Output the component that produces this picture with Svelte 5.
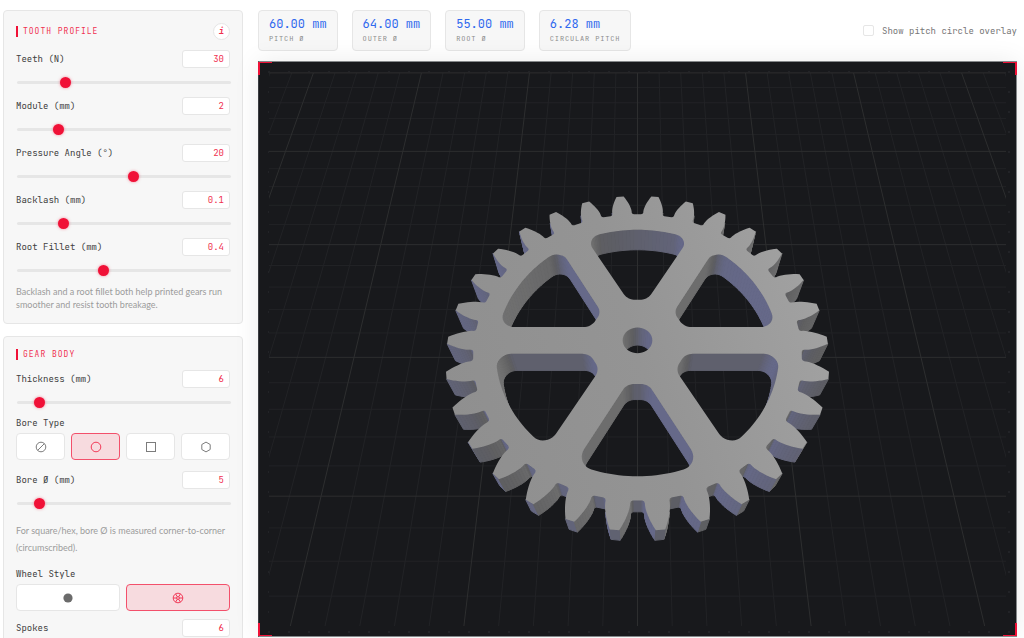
<script lang="ts">
	type Point = [number, number];

	interface Slider {
		id: string;
		label: string;
		min: number;
		max: number;
		step: number;
	}

	const profileSliders: Slider[] = [
		{ id: 'teeth', label: 'Teeth (N)', min: 6, max: 120, step: 1 },
		{ id: 'module', label: 'Module (mm)', min: 0.3, max: 10, step: 0.1 },
		{ id: 'pressure', label: 'Pressure Angle (°)', min: 14, max: 25, step: 0.5 },
		{ id: 'backlash', label: 'Backlash (mm)', min: 0, max: 0.5, step: 0.01 },
		{ id: 'fillet', label: 'Root Fillet (mm)', min: 0, max: 1, step: 0.05 }
	];
	const thicknessSlider: Slider = { id: 'thickness', label: 'Thickness (mm)', min: 2, max: 50, step: 0.5 };
	const boreSlider: Slider = { id: 'bore', label: 'Bore Ø (mm)', min: 1, max: 50, step: 0.5 };
	const spokeSlider: Slider = { id: 'spokes', label: 'Spokes', min: 3, max: 12, step: 1 };

	let params = $state<Record<string, number>>({
		teeth: 30,
		module: 2,
		pressure: 20,
		backlash: 0.1,
		fillet: 0.4,
		thickness: 6,
		bore: 5,
		spokes: 6
	});
	let boreType = $state('round');
	let wheelStyle = $state('spoked');
	let showPitch = $state(false);

	const boreTypes = ['none', 'round', 'square', 'hex'];
	const wheelStyles = ['solid', 'spoked'];

	let pitchD = $derived(params.teeth * params.module);
	let outerD = $derived(pitchD + 2 * params.module);
	let rootD = $derived(pitchD - 2.5 * params.module);

	let stats = $derived([
		{ value: pitchD, label: 'Pitch Ø' },
		{ value: outerD, label: 'Outer Ø' },
		{ value: rootD, label: 'Root Ø' },
		{ value: Math.PI * params.module, label: 'Circular Pitch' }
	]);

	// Camera: 45° lens looking down at the origin
	const FOCAL = 668;
	const TILT = Math.atan2(1.6, 0.9);
	const SIN = Math.sin(TILT);
	const COS = Math.cos(TILT);
	let distance = $derived(outerD * 1.8);

	function project(x: number, y: number, z: number): Point {
		const depth = distance - z * SIN + y * COS;
		return [(FOCAL * x) / depth, (-FOCAL * (z * COS + y * SIN)) / depth];
	}

	function polar(r: number, a: number): Point {
		return [r * Math.cos(a), r * Math.sin(a)];
	}

	function arc(cx: number, cy: number, r: number, a0: number, a1: number, n: number): Point[] {
		return Array.from({ length: n + 1 }, (_, i) => {
			const a = a0 + ((a1 - a0) * i) / n;
			return [cx + r * Math.cos(a), cy + r * Math.sin(a)] as Point;
		});
	}

	function gearOutline(): Point[] {
		const rp = pitchD / 2;
		const ro = outerD / 2;
		const rr = rootD / 2;
		const rb = rp * Math.cos((params.pressure * Math.PI) / 180);
		const inv = (r: number) => {
			const t = Math.acos(Math.min(1, rb / r));
			return Math.tan(t) - t;
		};
		const half = (Math.PI * params.module / 2 - params.backlash) / 2 / rp + inv(rp);
		const start = Math.max(rb, rr + params.fillet);
		const steps = 8;
		const flank: Point[] = [];
		flank.push([rr, half + params.fillet / rr]);
		flank.push([rr + params.fillet * 0.3, half + (params.fillet * 0.3) / rr]);
		flank.push([rr + params.fillet, half]);
		for (let i = 0; i <= steps; i++) {
			const r = start + ((ro - start) * i) / steps;
			flank.push([r, half - inv(r)]);
		}
		const pts: Point[] = [];
		for (let k = 0; k < params.teeth; k++) {
			const c = (k * 2 * Math.PI) / params.teeth;
			for (const [r, a] of flank) pts.push(polar(r, c - a));
			for (const [r, a] of [...flank].reverse()) pts.push(polar(r, c + a));
		}
		return pts;
	}

	function pocket(from: number, span: number): Point[] {
		const rim = rootD / 2 - 3.75;
		const hub = params.bore / 2 + 5.7;
		const w = 2.6;
		const f = 2.2;
		const outer = Math.asin((w + f) / (rim - f));
		const inner = Math.asin(Math.min(1, (w + f) / (hub + f)));
		const to = from + span;
		const q = Math.PI / 2;
		const o1 = polar(rim - f, from + outer);
		const o2 = polar(rim - f, to - outer);
		const i1 = polar(hub + f, from + inner);
		const i2 = polar(hub + f, to - inner);
		return [
			...arc(o1[0], o1[1], f, from - q, from + outer, 10),
			...arc(0, 0, rim, from + outer, to - outer, 20),
			...arc(o2[0], o2[1], f, to - outer, to + q, 10),
			...arc(i2[0], i2[1], f, to + q, to - inner + Math.PI, 8),
			...arc(0, 0, hub, to - inner, from + inner, 4),
			...arc(i1[0], i1[1], f, from + inner + Math.PI, from + 3 * q, 8)
		];
	}

	function holes(): Point[][] {
		const result: Point[][] = [];
		const r = params.bore / 2;
		if (boreType === 'round') result.push(arc(0, 0, r, 0, 2 * Math.PI, 40));
		if (boreType === 'square') result.push(arc(0, 0, r, Math.PI / 4, 2.25 * Math.PI, 4));
		if (boreType === 'hex') result.push(arc(0, 0, r, 0, 2 * Math.PI, 6));
		if (wheelStyle === 'spoked') {
			const span = (2 * Math.PI) / params.spokes;
			for (let k = 0; k < params.spokes; k++) result.push(pocket(k * span, span));
		}
		return result;
	}

	// Cool fill light from the left, weak neutral light from the right
	function shade(nx: number, ny: number): string {
		const cool = Math.max(0, -0.93 * nx - 0.37 * ny);
		const warm = Math.max(0, 0.97 * nx + 0.2 * ny);
		const r = Math.round(91 + 11 * cool + 24 * warm);
		const g = Math.round(91 + 14 * cool + 24 * warm);
		const b = Math.round(93 + 44 * cool + 22 * warm);
		return `rgb(${r}, ${g}, ${b})`;
	}

	function toPath(pts: Point[]): string {
		return 'M' + pts.map((p) => `${p[0].toFixed(2)} ${p[1].toFixed(2)}`).join('L') + 'Z';
	}

	function wallsOf(pts: Point[], z: number, flip: number) {
		const out: { y: number; d: string; fill: string }[] = [];
		pts.forEach(([x0, y0], i) => {
			const [x1, y1] = pts[(i + 1) % pts.length];
			const len = Math.hypot(x1 - x0, y1 - y0);
			if (len < 0.0001) return;
			const nx = (flip * (y1 - y0)) / len;
			const ny = (flip * (x0 - x1)) / len;
			if (nx * -x0 + ny * (-distance * COS - y0) <= 0) return;
			out.push({
				y: (y0 + y1) / 2,
				d: toPath([project(x0, y0, z), project(x1, y1, z), project(x1, y1, -z), project(x0, y0, -z)]),
				fill: shade(nx, ny)
			});
		});
		return out;
	}

	let gear = $derived.by(() => {
		const z = params.thickness / 2;
		const outline = gearOutline();
		const cuts = holes();
		const walls = [...wallsOf(outline, z, 1), ...cuts.flatMap((c) => wallsOf(c, z, -1))];
		walls.sort((a, b) => b.y - a.y);
		const face = [outline, ...cuts].map((c) => toPath(c.map(([x, y]) => project(x, y, z)))).join('');
		return { walls, face };
	});

	let pitchCircle = $derived(
		toPath(arc(0, 0, pitchD / 2, 0, 2 * Math.PI, 120).map(([x, y]) => project(x, y, params.thickness / 2)))
	);

	let grid = $derived.by(() => {
		const z = -params.thickness / 2;
		const lines: { a: Point; b: Point; major: boolean }[] = [];
		for (let i = -24; i <= 24; i++) {
			lines.push({ a: project(i * 5, 75, z), b: project(i * 5, -60, z), major: i % 5 === 0 });
		}
		for (let i = -12; i <= 15; i++) {
			lines.push({ a: project(-120, i * 5, z), b: project(120, i * 5, z), major: i % 5 === 0 });
		}
		return lines.sort((a, b) => Number(a.major) - Number(b.major));
	});
</script>

{#snippet control(s: Slider)}
	<div class="row">
		<div class="row-head">
			<label for={s.id}>{s.label}</label>
			<input class="value" id={s.id} type="number" step="any" bind:value={params[s.id]} />
		</div>
		<input
			class="range"
			type="range"
			aria-label={s.label}
			min={s.min}
			max={s.max}
			step={s.step}
			bind:value={params[s.id]}
		/>
	</div>
{/snippet}

<div class="page">
	<aside class="sidebar">
		<section class="panel">
			<header class="panel-head">
				<h2>Tooth Profile</h2>
				<button class="info" aria-label="About tooth profile">i</button>
			</header>
			{#each profileSliders as s (s.id)}
				{@render control(s)}
			{/each}
			<p class="hint">Backlash and a root fillet both help printed gears run smoother and resist tooth breakage.</p>
		</section>

		<section class="panel">
			<header class="panel-head">
				<h2>Gear Body</h2>
			</header>
			{@render control(thicknessSlider)}

			<div class="group" role="group" aria-labelledby="bore-label">
				<span class="group-label" id="bore-label">Bore Type</span>
				<div class="options">
					{#each boreTypes as type (type)}
						<button
							class="option"
							class:active={boreType === type}
							aria-label={type}
							aria-pressed={boreType === type}
							onclick={() => (boreType = type)}
						>
							<svg viewBox="0 0 12 12" class="icon">
								{#if type === 'none'}
									<circle cx="6" cy="6" r="4.8" />
									<path d="M2.6 9.4 9.4 2.6" />
								{:else if type === 'round'}
									<circle cx="6" cy="6" r="4.8" />
								{:else if type === 'square'}
									<rect x="1.5" y="1.5" width="9" height="9" />
								{:else}
									<path d="M6 1.1 10.2 3.5V8.5L6 10.9 1.8 8.5V3.5Z" />
								{/if}
							</svg>
						</button>
					{/each}
				</div>
			</div>

			{@render control(boreSlider)}
			<p class="hint loose">For square/hex, bore Ø is measured corner-to-corner (circumscribed).</p>

			<div class="group tight" role="group" aria-labelledby="wheel-label">
				<span class="group-label" id="wheel-label">Wheel Style</span>
				<div class="options">
					{#each wheelStyles as style (style)}
						<button
							class="option"
							class:active={wheelStyle === style}
							aria-label={style}
							aria-pressed={wheelStyle === style}
							onclick={() => (wheelStyle = style)}
						>
							<svg viewBox="0 0 12 12" class="icon">
								{#if style === 'solid'}
									<circle class="solid" cx="6" cy="6" r="4.6" />
								{:else}
									<circle cx="6" cy="6" r="4.8" />
									<circle cx="6" cy="6" r="1.4" />
									<path d="M7.4 6H10.8M4.6 6H1.2M6.7 7.2 8.4 10.1M5.3 4.8 3.6 1.9M5.3 7.2 3.6 10.1M6.7 4.8 8.4 1.9" />
								{/if}
							</svg>
						</button>
					{/each}
				</div>
			</div>

			{@render control(spokeSlider)}
		</section>
	</aside>

	<main class="main">
		<div class="toolbar">
			<div class="stats">
				{#each stats as stat (stat.label)}
					<div class="stat">
						<span class="stat-value">{stat.value.toFixed(2)} mm</span>
						<span class="stat-label">{stat.label}</span>
					</div>
				{/each}
			</div>
			<label class="overlay">
				<input type="checkbox" bind:checked={showPitch} />
				Show pitch circle overlay
			</label>
		</div>

		<div class="viewport">
			<svg class="scene" viewBox="-369 -277 738 554" preserveAspectRatio="xMidYMid slice">
				<defs>
					<linearGradient id="face" gradientUnits="userSpaceOnUse" x1="-190" y1="60" x2="190" y2="-60">
						<stop offset="0" stop-color="#8f8f8f" />
						<stop offset="0.5" stop-color="#949494" />
						<stop offset="1" stop-color="#a2a2a2" />
					</linearGradient>
				</defs>
				<rect class="floor" x="-2000" y="-2000" width="4000" height="4000" />
				{#each grid as line}
					<line class="grid" class:major={line.major} x1={line.a[0]} y1={line.a[1]} x2={line.b[0]} y2={line.b[1]} />
				{/each}
				{#each gear.walls as wall}
					<path class="wall" d={wall.d} fill={wall.fill} stroke={wall.fill} />
				{/each}
				<path d={gear.face} fill="url(#face)" fill-rule="evenodd" />
				{#if showPitch}
					<path class="pitch" d={pitchCircle} />
				{/if}
			</svg>
			<span class="corner top left"></span>
			<span class="corner top right"></span>
			<span class="corner bottom left"></span>
			<span class="corner bottom right"></span>
		</div>
	</main>
</div>

<style>
	:global(body) {
		background: #fff;
	}

	.page {
		--red: #f01137;
		--red-text: #f0304f;
		--line: #e6e6e6;
		--mono: 'JetBrains Mono', 'DejaVu Sans Mono', monospace;
		box-sizing: border-box;
		display: flex;
		gap: 15px;
		height: 100vh;
		padding: 10px 7px 1px 3px;
		overflow: hidden;
		font-family: var(--mono);
		font-size: 9px;
		color: #404040;
	}

	.sidebar {
		flex: 0 0 240px;
		display: flex;
		flex-direction: column;
		gap: 12px;
	}

	.panel {
		flex: none;
		padding: 12px;
		background: #f7f7f7;
		border: 1px solid var(--line);
		border-radius: 4px;
	}

	.panel-head {
		display: flex;
		align-items: center;
		justify-content: space-between;
		margin-bottom: 10px;
	}

	h2 {
		margin: 0;
		padding-left: 5px;
		border-left: 2px solid var(--red);
		font-size: 8px;
		font-weight: 400;
		line-height: 11px;
		letter-spacing: 1px;
		text-transform: uppercase;
		color: var(--red-text);
	}

	.info {
		width: 17px;
		height: 17px;
		padding: 0;
		background: #fff;
		border: 1px solid var(--line);
		border-radius: 50%;
		font: italic bold 9px/15px var(--mono);
		color: var(--red-text);
		cursor: pointer;
	}

	.row {
		height: 47px;
	}

	.row-head {
		display: flex;
		align-items: center;
		justify-content: space-between;
		height: 18px;
		margin-bottom: 9px;
	}

	.value {
		box-sizing: border-box;
		width: 48px;
		height: 18px;
		padding: 0 5px;
		background: #fff;
		border: 1px solid var(--line);
		border-radius: 3px;
		font: 9px var(--mono);
		text-align: right;
		color: var(--red-text);
		appearance: textfield;
	}

	.value::-webkit-inner-spin-button {
		display: none;
	}

	.range {
		display: block;
		width: 100%;
		height: 11px;
		margin: 0 0 0 1px;
		background: none;
		appearance: none;
		cursor: pointer;
	}

	.range::-webkit-slider-runnable-track {
		height: 3px;
		background: #e6e6e6;
		border-radius: 2px;
	}

	.range::-webkit-slider-thumb {
		width: 11px;
		height: 11px;
		margin-top: -4px;
		background: var(--red);
		border-radius: 50%;
		box-shadow: 0 0 3px rgba(240, 17, 55, 0.5);
		appearance: none;
	}

	.hint {
		margin: 0;
		font-family: Lato, sans-serif;
		font-size: 9px;
		line-height: 13px;
		color: #9c9c9c;
	}

	.hint.loose {
		margin: 4px 0 12px;
		line-height: 17px;
	}

	.group {
		margin-bottom: 11px;
	}

	.group.tight {
		margin-bottom: 8px;
	}

	.group-label {
		display: block;
		margin-bottom: 3px;
		line-height: 13px;
	}

	.options {
		display: flex;
		gap: 6px;
	}

	.option {
		flex: 1;
		display: flex;
		align-items: center;
		justify-content: center;
		height: 27px;
		padding: 0;
		background: #fff;
		border: 1px solid var(--line);
		border-radius: 4px;
		color: #7c7c7c;
		cursor: pointer;
	}

	.option.active {
		background: #f7dbdf;
		border-color: #f3506b;
		color: #f23a58;
	}

	.icon {
		width: 12px;
		height: 12px;
		fill: none;
		stroke: currentColor;
	}

	.icon .solid {
		fill: #6b6b6b;
		stroke: none;
	}

	.main {
		flex: 1;
		min-width: 0;
		display: flex;
		flex-direction: column;
		gap: 10px;
	}

	.toolbar {
		display: flex;
		align-items: center;
		justify-content: space-between;
	}

	.stats {
		display: flex;
		gap: 14px;
	}

	.stat {
		display: flex;
		flex-direction: column;
		padding: 6px 10px 5px;
		background: #f7f7f7;
		border: 1px solid var(--line);
		border-radius: 4px;
	}

	.stat-value {
		font-size: 12px;
		line-height: 15px;
		color: #3069ee;
	}

	.stat-label {
		font-size: 7px;
		line-height: 13px;
		letter-spacing: 0.12em;
		text-transform: uppercase;
		color: #8e8e8e;
	}

	.overlay {
		display: flex;
		align-items: center;
		gap: 8px;
		color: #777;
		cursor: pointer;
	}

	.overlay input {
		width: 11px;
		height: 11px;
		margin: 0;
		background: #fff;
		border: 1px solid var(--line);
		border-radius: 2px;
		appearance: none;
	}

	.overlay input:checked {
		background: var(--red);
	}

	.viewport {
		position: relative;
		flex: 1;
		min-height: 0;
		padding: 10px;
		background: radial-gradient(circle at 10px 10px, #222327 1px, #18191c 1px) 0 0 / 20px 20px;
		border: 1px solid #85888a;
		border-left-color: #3a3c40;
		box-shadow: 0 0 24px rgba(0, 0, 0, 0.08);
	}

	.scene {
		display: block;
		width: 100%;
		height: 100%;
	}

	.floor {
		fill: #18191c;
	}

	.grid {
		stroke: #222326;
	}

	.grid.major {
		stroke: #2d2e2f;
	}

	.wall {
		stroke-width: 1;
		stroke-linejoin: round;
	}

	.pitch {
		fill: none;
		stroke: #4a7df0;
	}

	.corner {
		position: absolute;
		width: 12px;
		height: 12px;
		border: 0 solid var(--red);
	}

	.top {
		top: 0;
		border-top-width: 1px;
	}

	.bottom {
		bottom: 0;
		border-bottom-width: 1px;
	}

	.left {
		left: -1px;
		border-left-width: 2px;
	}

	.right {
		right: -1px;
		border-right-width: 2px;
	}
</style>
